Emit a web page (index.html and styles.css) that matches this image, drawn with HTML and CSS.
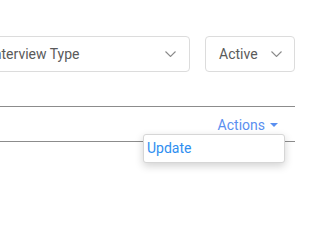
FILE: index.html
```html
<!DOCTYPE html>
<html lang="en">
<head>
    <meta charset="UTF-8">
    <meta name="viewport" content="width=device-width, initial-scale=1.0">
    <title>Interviews</title>
    <link rel="stylesheet" href="styles.css">
</head>
<body>

<div class="page">
    <div class="filters">
        <div class="select select-type">
            <span>Interview Type</span>
            <svg class="chevron" width="11" height="6" viewBox="0 0 11 6"><path d="M0.5 0.5 L5.5 5.5 L10.5 0.5" fill="none" stroke="#8a8a8a" stroke-width="1.1"/></svg>
        </div>
        <div class="select select-status">
            <span>Active</span>
            <svg class="chevron" width="11" height="6" viewBox="0 0 11 6"><path d="M0.5 0.5 L5.5 5.5 L10.5 0.5" fill="none" stroke="#8a8a8a" stroke-width="1.1"/></svg>
        </div>
    </div>

    <div class="toolbar">
        <div class="actions">Actions <span class="caret"></span></div>
        <div class="menu">
            <div class="menu-item">Update</div>
        </div>
    </div>
</div>

</body>
</html>
```

FILE: styles.css
```css
body {
    font-family: Roboto, "Liberation Sans", sans-serif;
    font-size: 14px;
    background-color: #ffffff;
    margin: 0;
}
.page {
    width: 295px;
    min-height: 246px;
    box-sizing: border-box;
    padding-top: 36px;
}
.filters {
    display: flex;
    gap: 15px;
}
.select {
    box-sizing: border-box;
    height: 36px;
    border: 1px solid #dcdcdc;
    border-radius: 4px;
    display: flex;
    align-items: center;
    justify-content: space-between;
    color: #5a5a5a;
    font-size: 14px;
}
.select-type {
    width: 213px;
    margin-left: -23px;
    padding: 0 13px 0 12px;
}
.select-status {
    width: 90px;
    padding: 0 12px 0 13px;
}
.toolbar {
    position: relative;
    margin-top: 34px;
    height: 34px;
    border-top: 1px solid #8c8c8c;
    border-bottom: 1px solid #8c8c8c;
    display: flex;
    align-items: center;
    justify-content: flex-end;
    padding-right: 17px;
}
.actions {
    color: #5a8ff0;
    display: flex;
    align-items: center;
    gap: 5px;
    margin-top: 1px;
}
.caret {
    width: 0;
    height: 0;
    border-left: 4px solid transparent;
    border-right: 4px solid transparent;
    border-top: 4px solid #5a8ff0;
    margin-top: 1px;
}
.menu {
    position: absolute;
    top: 27px;
    right: 10px;
    z-index: 2;
    width: 142px;
    box-sizing: border-box;
    background-color: #ffffff;
    border: 1px solid #d6d6d6;
    border-radius: 3px;
    box-shadow: 0px 3px 8px rgba(0, 0, 0, 0.18);
    padding: 3px 3px 4px 3px;
}
.menu-item {
    color: #2f8ef0;
    line-height: 20px;
}
```
